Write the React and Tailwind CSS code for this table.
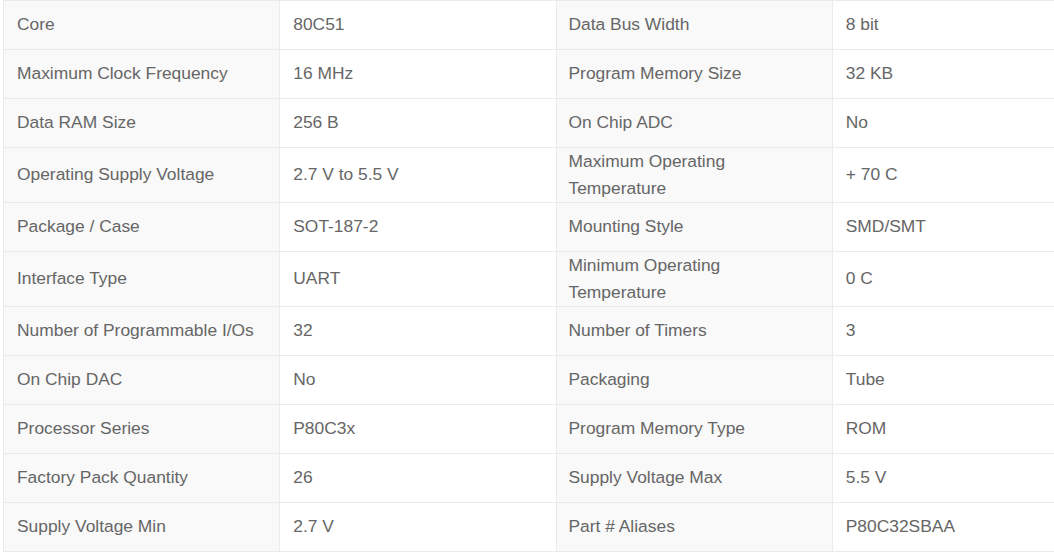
import React from "react";

const rows = [
  ["Core", "80C51", "Data Bus Width", "8 bit"],
  ["Maximum Clock Frequency", "16 MHz", "Program Memory Size", "32 KB"],
  ["Data RAM Size", "256 B", "On Chip ADC", "No"],
  ["Operating Supply Voltage", "2.7 V to 5.5 V", "Maximum Operating Temperature", "+ 70 C"],
  ["Package / Case", "SOT-187-2", "Mounting Style", "SMD/SMT"],
  ["Interface Type", "UART", "Minimum Operating Temperature", "0 C"],
  ["Number of Programmable I/Os", "32", "Number of Timers", "3"],
  ["On Chip DAC", "No", "Packaging", "Tube"],
  ["Processor Series", "P80C3x", "Program Memory Type", "ROM"],
  ["Factory Pack Quantity", "26", "Supply Voltage Max", "5.5 V"],
  ["Supply Voltage Min", "2.7 V", "Part # Aliases", "P80C32SBAA"],
];

function App() {
  return (
    <div className="w-[1054px] h-[557px] overflow-hidden bg-white">
      <div className="pl-[3px]">
        <table
          className="w-[1106px] table-fixed border-collapse text-[17.4px] text-[#666]"
          style={{ fontFamily: '"Liberation Sans", Arial, sans-serif' }}
        >
          <tbody>
            {rows.map((r, i) => (
              <tr key={i}>
                <td className="h-[49px] px-[13px] pt-0 pb-[2px] leading-[26.5px] align-middle border border-[#ebebeb] bg-[#f9f9f9]">
                  {r[0]}
                </td>
                <td className="h-[49px] px-[13px] pt-0 pb-[2px] leading-[26.5px] align-middle border border-[#ebebeb] bg-white">
                  {r[1]}
                </td>
                <td className="h-[49px] px-[12px] pt-0 pb-[1px] leading-[26.5px] align-middle border border-[#ebebeb] bg-[#f9f9f9]">
                  {r[2]}
                </td>
                <td className="h-[49px] px-[13px] pt-0 pb-[2px] leading-[26.5px] align-middle border border-[#ebebeb] bg-white">
                  {r[3]}
                </td>
              </tr>
            ))}
          </tbody>
        </table>
      </div>
    </div>
  );
}

export default App;
